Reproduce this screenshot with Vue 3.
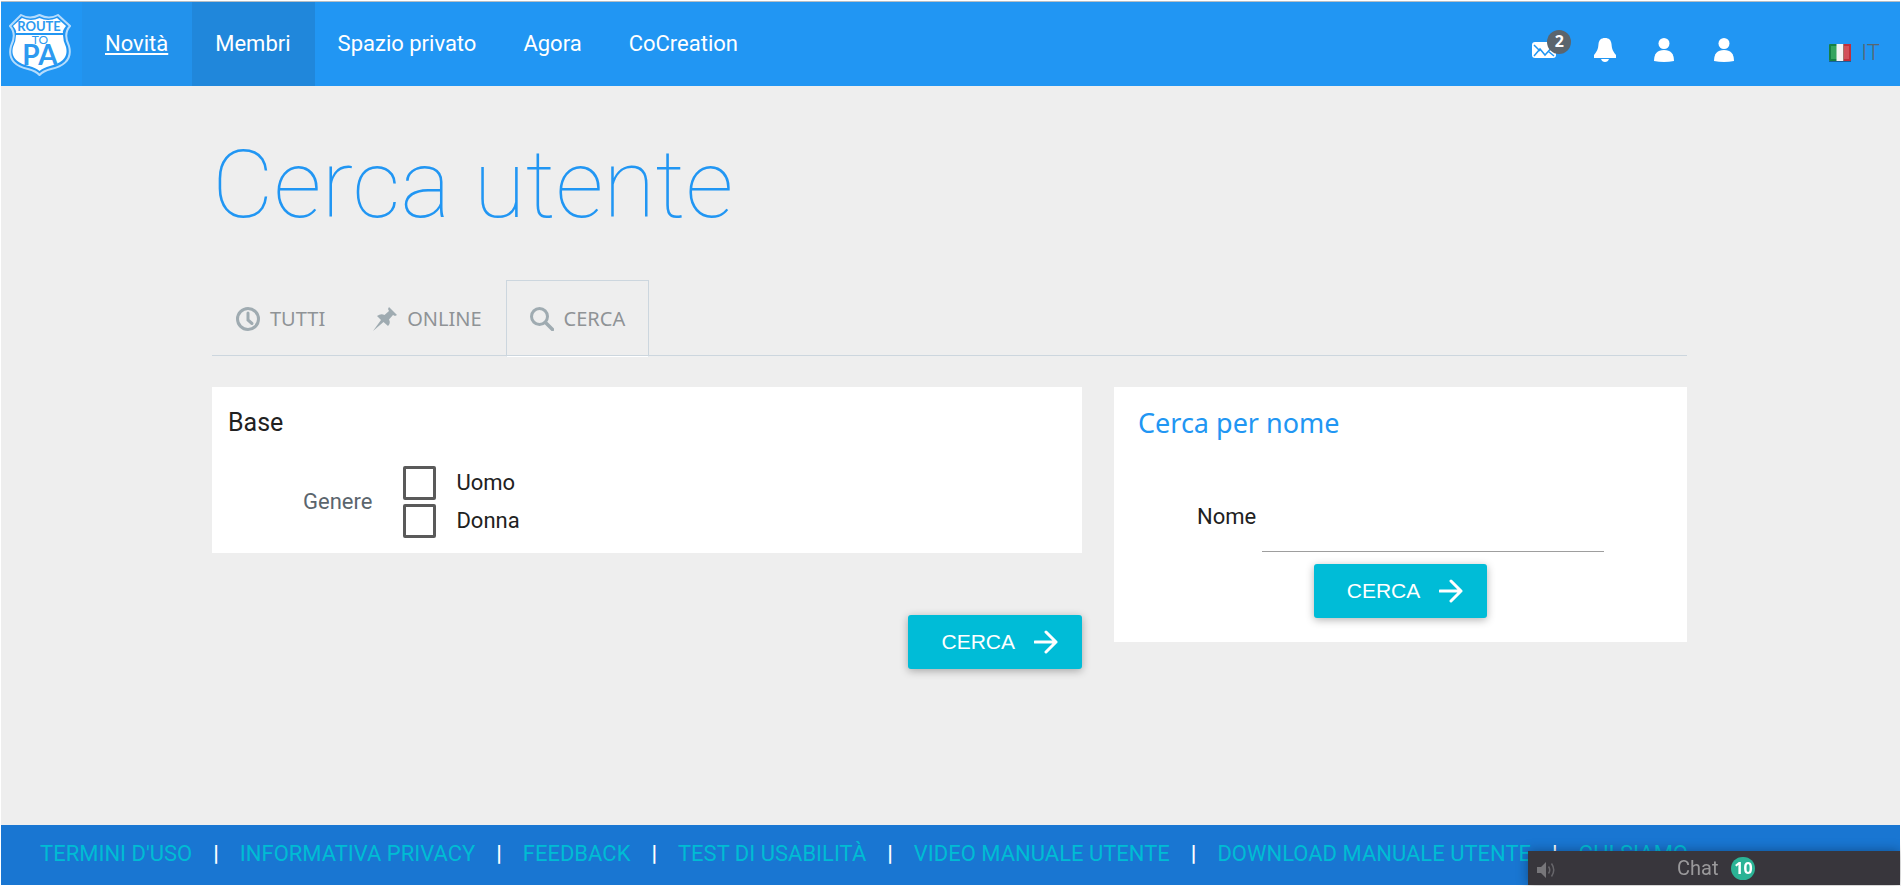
<script setup>
import { ref } from 'vue'

const menu = [
  { label: 'Novità', state: 'hovered' },
  { label: 'Membri', state: 'active' },
  { label: 'Spazio privato', state: '' },
  { label: 'Agora', state: '' },
  { label: 'CoCreation', state: '' },
]
const tabs = [
  { label: 'TUTTI', icon: 'clock' },
  { label: 'ONLINE', icon: 'pin' },
  { label: 'CERCA', icon: 'search', active: true },
]
const footerLinks = [
  "TERMINI D'USO",
  'INFORMATIVA PRIVACY',
  'FEEDBACK',
  'TEST DI USABILITÀ',
  'VIDEO MANUALE UTENTE',
  'DOWNLOAD MANUALE UTENTE',
  'CHI SIAMO',
]
const genders = ['Uomo', 'Donna']
const selected = ref([])
const name = ref('')
</script>

<template>
  <div class="page">
    <header class="topbar">
      <a class="logo" href="#" aria-label="Route to PA">
        <svg width="62" height="62" viewBox="0 0 62 62">
          <path d="M12 1Q21 6 30.500 1Q40 6 49 1L61 12Q54 20 60 32C64 47 52 53 42 55Q34 57 30.500 61Q27 57 19 55C9 53-2 47 2 32Q8 20 1 12Z" fill="#2196f3" stroke="#b5dcfc" stroke-width="2" />
          <path d="M13 4Q22 8 30.500 4Q39 8 48 4L57 12Q53 17 54 19H7Q8 17 4 12Z" fill="#fff" />
          <path d="M7 21H54Q54 27 57 33C60 45 50 50 41 52Q34 54 30.500 57Q27 54 20 52C11 50 1 45 4 33Q7 27 7 21Z" fill="#fff" />
          <text x="30" y="17" class="logo-text" font-size="13" text-anchor="middle">ROUTE</text>
          <text x="31" y="30" class="logo-light" font-size="12" text-anchor="middle">TO</text>
          <text x="31" y="51" class="logo-text" font-size="28" text-anchor="middle">PA</text>
        </svg>
      </a>
      <nav class="menu">
        <a v-for="m in menu" :key="m.label" href="#" :class="m.state">{{ m.label }}</a>
      </nav>
      <div class="tools">
        <button class="tool" aria-label="Messaggi">
          <svg width="24" height="16" viewBox="0 0 24 16">
            <rect width="24" height="16" rx="3" fill="#fff" />
            <path d="M2 3L8 9M22 3L13 13L8 7L2 14M22 14L16 9" fill="none" stroke="#2196f3" stroke-width="1.500" />
          </svg>
          <span class="count">2</span>
        </button>
        <button class="tool" aria-label="Notifiche">
          <svg width="22" height="24" viewBox="0 0 22 24">
            <path d="M11 0C15 0 17 2 17.500 6C18 12 19 13 22 17V20H0V17C3 13 4 12 4.500 6C5 2 7 0 11 0ZM7 21H15Q14 24 11 24Q8 24 7 21Z" fill="#fff" />
          </svg>
        </button>
        <button v-for="n in 2" :key="n" class="tool" :aria-label="n === 1 ? 'Contatti' : 'Profilo'">
          <svg width="20" height="24" viewBox="0 0 20 24">
            <circle cx="10" cy="5.500" r="5.500" fill="#fff" />
            <path d="M0 23Q0 12 10 12Q20 12 20 23Q10 25 0 23Z" fill="#fff" />
          </svg>
        </button>
      </div>
      <a class="lang" href="#">
        <svg width="22" height="18" viewBox="0 0 22 18">
          <rect width="22" height="17" rx="1" fill="#168044" />
          <rect x="2" y="2" width="6" height="13" fill="#35a45f" />
          <rect x="7.500" width="7" height="17" fill="#f4f4f4" />
          <rect x="14.500" width="7.500" height="17" fill="#c02f3b" />
          <rect x="15" y="2" width="5" height="13" fill="#d2505a" />
          <path d="M0 17.500H22" stroke="#17609c" />
        </svg>
        <span>IT</span>
      </a>
    </header>

    <main class="content">
      <h1>Cerca utente</h1>
      <nav class="tabs">
        <a v-for="t in tabs" :key="t.label" href="#" :class="{ active: t.active }">
          <svg v-if="t.icon === 'clock'" width="24" height="24" viewBox="0 0 24 24">
            <circle cx="12" cy="12" r="10.500" fill="none" stroke="#9fabb1" stroke-width="3" />
            <path d="M12 6v7l4 3.500" fill="none" stroke="#9fabb1" stroke-width="3" stroke-linecap="round" />
          </svg>
          <svg v-else-if="t.icon === 'pin'" width="24" height="24" viewBox="0 0 24 24">
            <path d="M16 0L24 8L22 9L20 8L16 12.500Q18 16 15 19L10.500 15L0 24L8 13L4 9Q8 6 11.500 8L16 4L15 2Z" fill="#9fabb1" />
          </svg>
          <svg v-else width="24" height="24" viewBox="0 0 24 24">
            <circle cx="9.500" cy="9.500" r="8" fill="none" stroke="#9fabb1" stroke-width="3" />
            <path d="M15.500 15.500L22.500 22.500" stroke="#9fabb1" stroke-width="3.500" stroke-linecap="round" />
          </svg>
          {{ t.label }}
        </a>
      </nav>

      <div class="columns">
        <form class="filters" @submit.prevent>
          <section class="card base">
            <h2>Base</h2>
            <div class="field" role="group" aria-labelledby="gender">
              <span id="gender" class="field-label">Genere</span>
              <div class="options">
                <label v-for="g in genders" :key="g">
                  <input v-model="selected" type="checkbox" :value="g" />
                  {{ g }}
                </label>
              </div>
            </div>
          </section>
          <button class="submit" type="submit">
            CERCA
            <svg width="24" height="24" viewBox="0 0 24 24"><path d="M1 12H22M12 2L22 12L12 22" fill="none" stroke="#fff" stroke-width="3" stroke-linecap="round" stroke-linejoin="round" /></svg>
          </button>
        </form>

        <form class="card by-name" @submit.prevent>
          <h2>Cerca per nome</h2>
          <div class="name-row">
            <label for="name">Nome</label>
            <input id="name" v-model="name" type="text" />
          </div>
          <button class="submit" type="submit">
            CERCA
            <svg width="24" height="24" viewBox="0 0 24 24"><path d="M1 12H22M12 2L22 12L12 22" fill="none" stroke="#fff" stroke-width="3" stroke-linecap="round" stroke-linejoin="round" /></svg>
          </button>
        </form>
      </div>
    </main>

    <footer class="footer">
      <template v-for="(l, i) in footerLinks" :key="l">
        <span v-if="i" class="sep">|</span>
        <a href="#">{{ l }}</a>
      </template>
    </footer>

    <aside class="chat">
      <button class="sound" aria-label="Audio">
        <svg width="18" height="16" viewBox="0 0 18 16">
          <path d="M0 5H4L9 0V16L4 11H0Z" fill="#77767a" />
          <path d="M11.500 4.500Q14 8 11.500 11.500M14.500 1.500Q19 8 14.500 14.500" fill="none" stroke="#67666b" stroke-width="1.500" />
        </svg>
      </button>
      <span>Chat</span>
      <span class="online">10</span>
    </aside>
  </div>
</template>

<style>
body {
  margin: 0;
  background: #fff;
}
</style>

<style scoped>
.page {
  box-sizing: border-box;
  min-height: 100vh;
  display: flex;
  flex-direction: column;
  border: 1px solid #fff;
  background: #eee;
  color: #212121;
  font: 22px/30px Roboto, sans-serif;
}
a {
  color: inherit;
  text-decoration: none;
}
button {
  border: 0;
  padding: 0;
  background: none;
  font: inherit;
  color: inherit;
  cursor: pointer;
}
svg {
  display: block;
  flex: none;
}
.topbar {
  display: flex;
  height: 84px;
  border-top: 1px solid #b5bdc4;
  background: #2196f3;
  color: #fff;
}
.logo {
  padding: 12px 11px 0 8px;
}
.logo-text {
  font-family: Lato, sans-serif;
  font-weight: 700;
  fill: #2d9af0;
}
.logo-light {
  font-family: Lato, sans-serif;
  fill: #2d9af0;
}
.menu {
  display: flex;
}
.menu a {
  padding: 27px 24px 0 23px;
}
.menu .hovered {
  background: #2292ec;
  text-decoration: underline;
}
.menu .active {
  background: #2087db;
}
.tools {
  display: flex;
  align-items: center;
  gap: 38px;
  margin-left: auto;
  padding-top: 12px;
}
.tool {
  position: relative;
  min-width: 22px;
}
.count {
  position: absolute;
  left: 15px;
  top: -12px;
  width: 24px;
  height: 24px;
  border-radius: 12px;
  background: #5b656d;
  font: bold 16px/22px "Open Sans", sans-serif;
}
.lang {
  display: flex;
  align-items: center;
  gap: 10px;
  padding: 18px 20px 0 0;
  margin-left: 93px;
  color: #5b656d;
  font-weight: 300;
}
.content {
  box-sizing: border-box;
  flex: 1;
  width: 90%;
  max-width: 1477px;
  margin: 0 auto;
  padding-right: 2px;
}
h1 {
  margin: 43px 0 40px;
  color: #2196f3;
  font-size: 95px;
  line-height: 111px;
  font-weight: 100;
}
.tabs {
  display: flex;
  height: 75px;
  border-bottom: 1px solid #ccd6de;
}
.tabs a {
  display: flex;
  align-items: center;
  gap: 10px;
  margin-bottom: -2px;
  padding: 0 23px;
  border: 1px solid transparent;
  color: #8f9396;
  font: 20px/30px "Noto Sans", sans-serif;
}
.tabs .active {
  border-color: #ccd6de;
  border-bottom-color: #fff;
}
.columns {
  display: grid;
  grid-template-columns: 870fr 573fr;
  gap: 32px;
  align-items: start;
  padding: 31px 0 40px;
}
.card {
  box-sizing: border-box;
  background: #fff;
}
.filters {
  display: flex;
  flex-direction: column;
  align-items: flex-end;
  gap: 62px;
}
.base {
  width: 100%;
  padding: 21px 16px 15px;
}
h2 {
  margin: 0;
  font-size: 25px;
  line-height: 30px;
  font-weight: 400;
}
.field {
  display: flex;
  align-items: center;
  gap: 31px;
  padding: 28px 0 0 75px;
}
.field-label {
  color: #5b656d;
}
.options {
  display: grid;
  gap: 4px;
}
.options label {
  display: flex;
  align-items: center;
  gap: 20px;
}
.options input {
  appearance: none;
  width: 33px;
  height: 34px;
  margin: 0;
  border: 3px solid #5a5a5a;
  border-radius: 2px;
}
.options input:checked {
  background: #00bcd4;
}
.submit {
  display: flex;
  align-items: center;
  gap: 19px;
  height: 54px;
  padding: 0 24px 0 33px;
  border-radius: 3px;
  background: #00bcd7;
  color: #fff;
  font-family: "Liberation Sans", sans-serif;
  font-size: 21px;
  box-shadow: 0 2px 8px rgba(0, 0, 0, 0.3);
}
.by-name {
  display: flex;
  flex-direction: column;
  align-items: center;
  padding: 20px 24px 24px;
}
.by-name h2 {
  align-self: stretch;
  color: #2196f3;
  font-family: "Noto Sans", sans-serif;
  font-size: 27px;
  line-height: 32px;
}
.name-row {
  display: flex;
  align-self: stretch;
  align-items: center;
  gap: 6px;
  padding: 43px 59px 12px;
}
.name-row input {
  flex: 1;
  min-width: 0;
  height: 70px;
  box-sizing: border-box;
  border: 0;
  border-bottom: 1px solid #9e9e9e;
  font: inherit;
  outline: 0;
}
.footer {
  display: flex;
  height: 60px;
  box-sizing: border-box;
  padding: 14px 40px 0 39px;
  gap: 21px;
  overflow: hidden;
  white-space: nowrap;
  background: #1976d2;
  color: #00bcd4;
}
.sep {
  color: #fff;
  font-weight: 700;
}
.chat {
  position: fixed;
  right: 1px;
  bottom: 1px;
  display: flex;
  box-sizing: border-box;
  align-items: center;
  width: 372px;
  height: 34px;
  padding-left: 9px;
  background: #38363c;
  color: #9a999b;
  font-size: 20px;
  box-shadow: 0 0 12px rgba(0, 0, 0, 0.35);
}
.sound {
  margin: 4px 122px 0 0;
}
.online {
  width: 24px;
  margin-left: 13px;
  border-radius: 12px;
  background: #2bb395;
  color: #fff;
  font: bold 16px/23px "Open Sans", sans-serif;
  text-align: center;
}
</style>
